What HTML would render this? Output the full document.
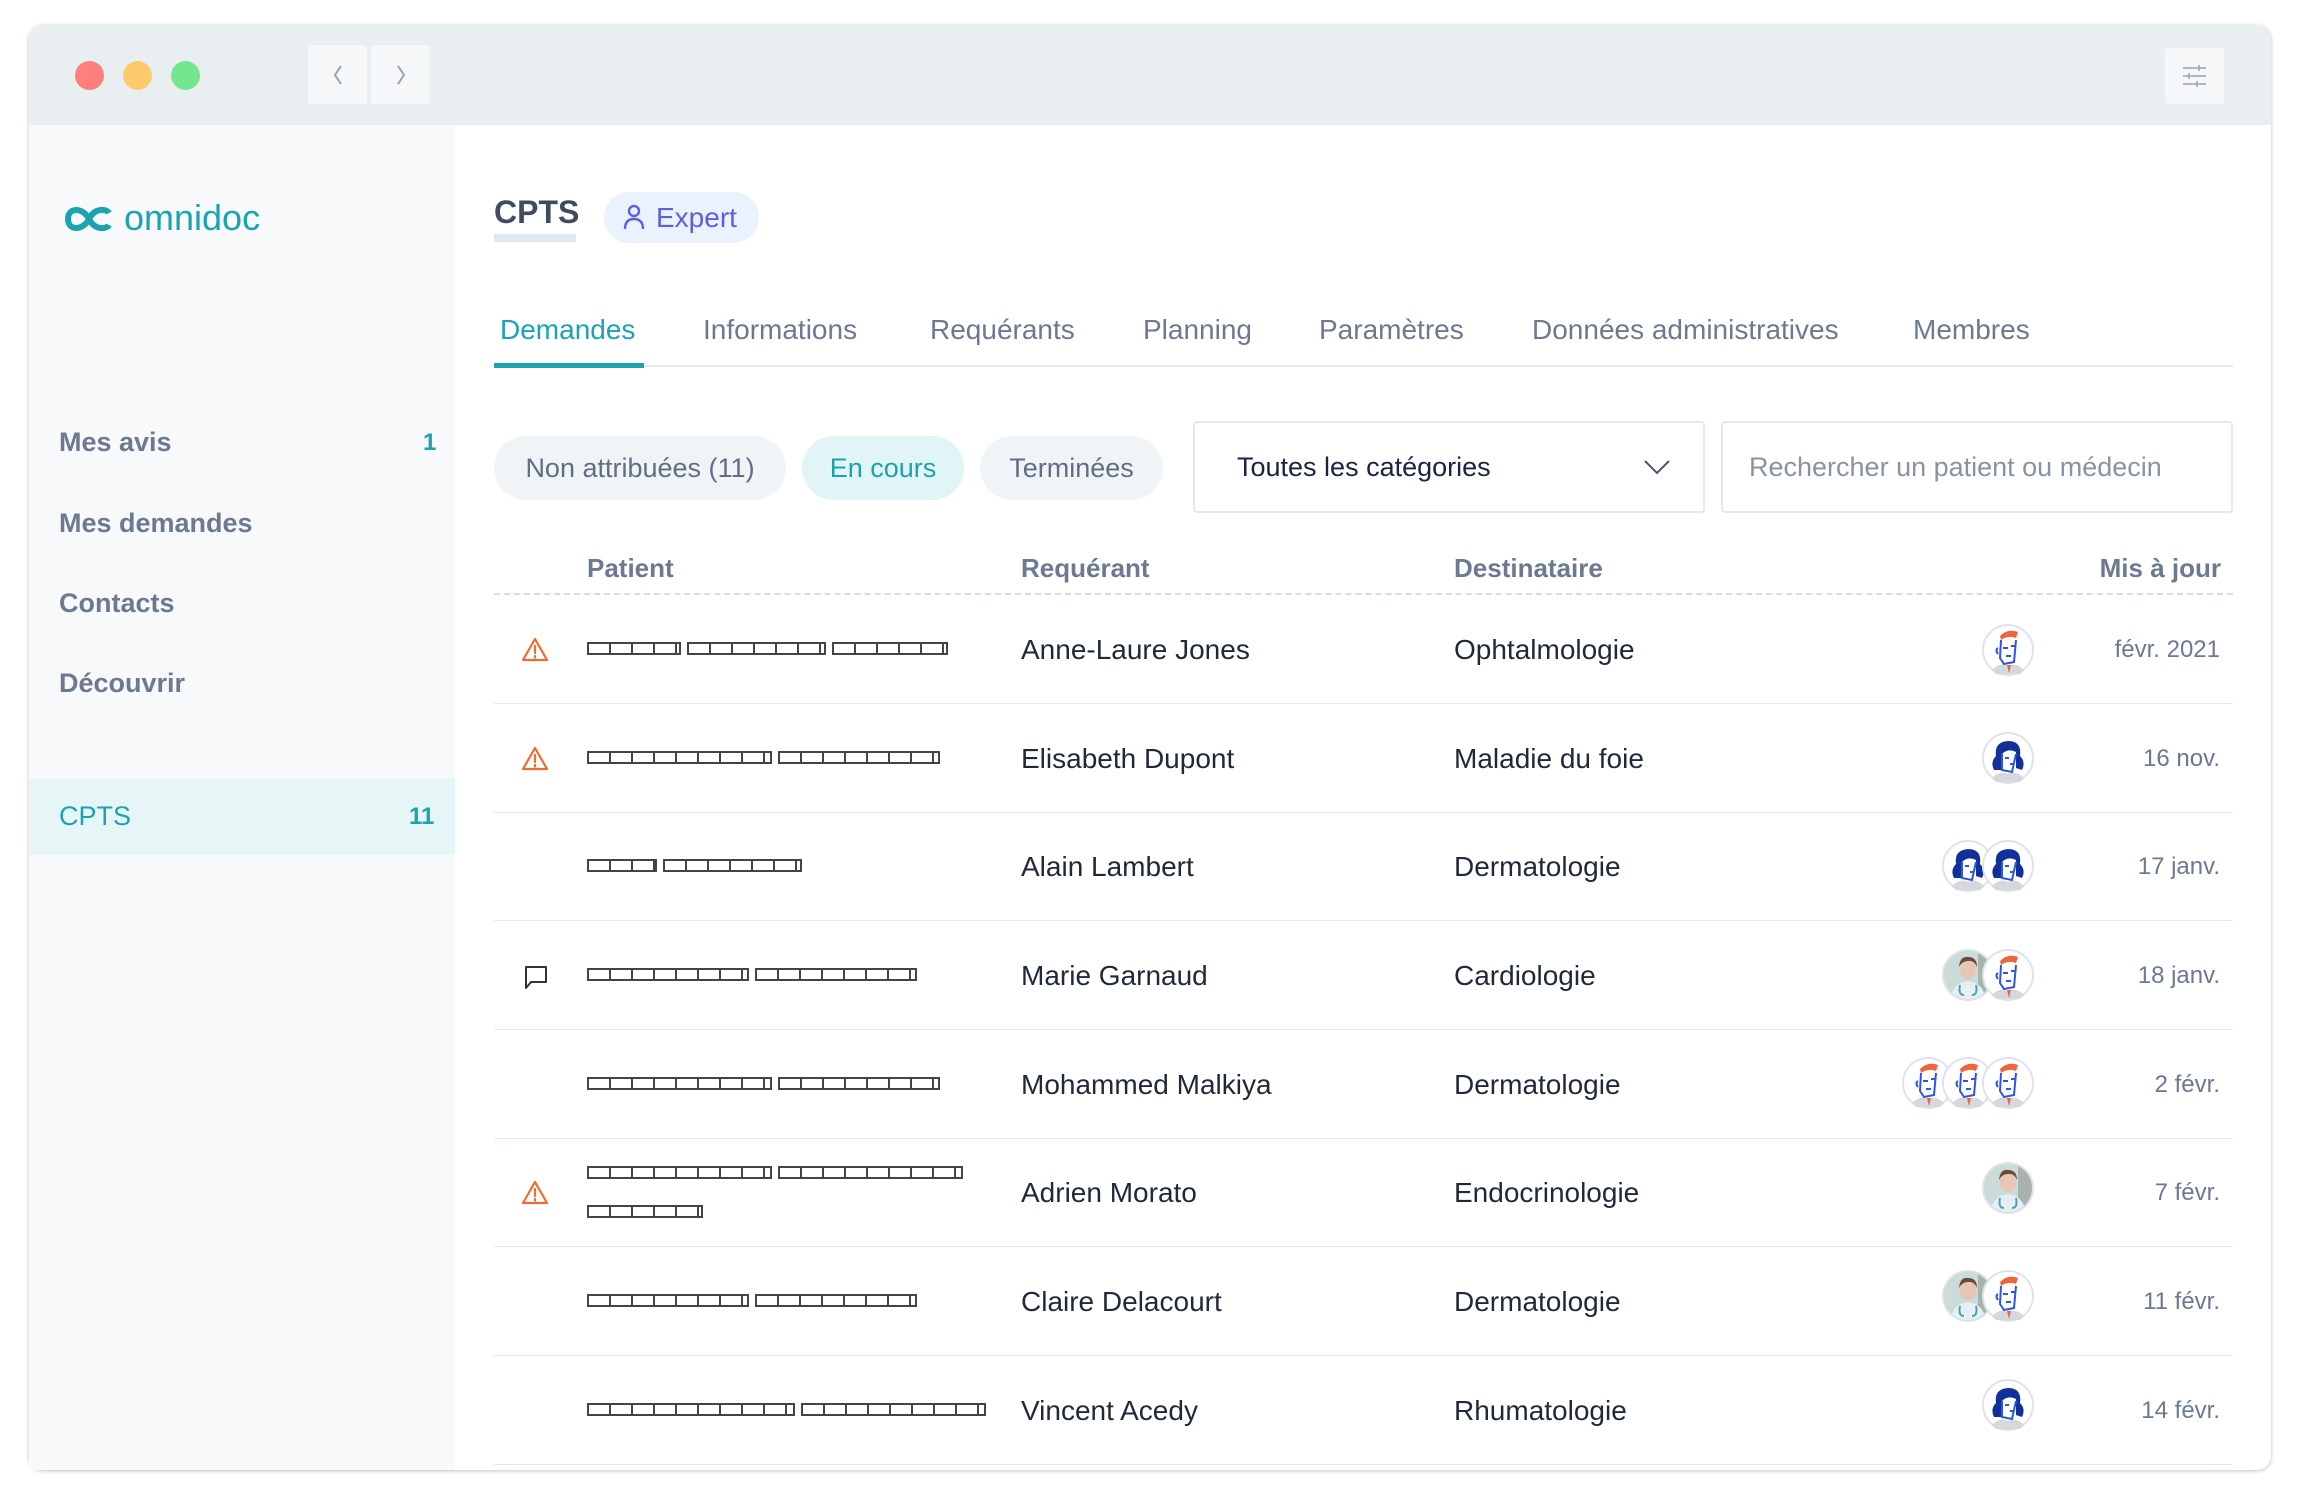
<!DOCTYPE html>
<html><head><meta charset="utf-8"><style>
*{margin:0;padding:0;box-sizing:border-box}
body{width:2300px;height:1496px;background:#fff;font-family:"Liberation Sans",sans-serif;position:relative;overflow:hidden}
.abs{position:absolute}
.win{left:29px;top:25px;width:2242px;height:1445px;border-radius:14px;background:#fff;box-shadow:0 1px 4px rgba(0,0,0,.25);overflow:hidden}
.bar{left:29px;top:25px;width:2242px;height:100px;background:#e9eff1;border-radius:14px 14px 0 0}
.dot{width:29px;height:29px;border-radius:50%;top:61px}
.nav{top:45px;width:59px;height:59px;background:#f5f7f9;border-radius:3px}
.side{left:29px;top:125px;width:426px;height:1345px;background:#f7f9fb}
.si{left:59px;font-size:27px;color:#6b7a90;font-weight:bold}
.tab{top:314px;font-size:28px;color:#6b7a90}
.pill{top:436px;height:64px;border-radius:32px;background:#f1f4f7;font-size:27px;color:#5f6e85;line-height:64px;text-align:center}
.h{top:553px;font-size:26px;color:#6b7a90;font-weight:bold}
.row{left:494px;width:1739px;height:1px;background:#e2e8f0}
.cell{font-size:28px;color:#1f2937}
.date{font-size:24px;color:#6b7a90;right:80px;text-align:right;width:200px}
.tofu{display:inline-block;height:13px;border:2px solid #444;background:repeating-linear-gradient(90deg,transparent 0 20px,#444 20px 22px);margin-right:6px;vertical-align:middle}
.pt{left:587px}
</style></head><body>
<svg width="0" height="0" style="position:absolute">
<defs>
<symbol id="man" viewBox="0 0 52 52"><circle cx="26" cy="26" r="25" fill="#fff" stroke="#dfe3e8" stroke-width="2"/><path d="M10 46 Q18 38 26 42 Q34 38 42 46 L38 50 H14Z" fill="#d5d8dc"/><path d="M18 12 Q26 4 36 8 L34 14 Q26 11 19 16Z" fill="#f0643c"/><path d="M19 16 L18 34 L22 40 L32 38 L34 16 M21 24 h5 M29 22 h4 M24 32 h5 M16 24 q-3 2 0 6" stroke="#2f55e6" stroke-width="2" fill="none"/><path d="M25 41 l2 8 2-8z" fill="#f0643c"/></symbol>
<symbol id="woman" viewBox="0 0 52 52"><circle cx="26" cy="26" r="25" fill="#fff" stroke="#dfe3e8" stroke-width="2"/><path d="M10 46 Q18 38 26 42 Q34 38 42 46 L38 50 H14Z" fill="#d5d8dc"/><path d="M12 38 Q8 30 14 24 Q12 10 26 9 Q40 9 38 24 Q44 30 40 38 L34 36 L34 20 Q26 16 20 22 L20 38Z" fill="#12309a"/><path d="M20 22 L20 38 L30 40 L34 22 M23 26 h4 M28 32 h4" stroke="#2f55e6" stroke-width="2" fill="none"/></symbol>
<symbol id="photo" viewBox="0 0 52 52"><defs><clipPath id="c"><circle cx="26" cy="26" r="24"/></clipPath></defs><circle cx="26" cy="26" r="25" fill="#cfe0e0" stroke="#dfe3e8" stroke-width="2"/><g clip-path="url(#c)"><rect x="0" y="0" width="52" height="52" fill="#c9dcd8"/><rect x="36" y="0" width="16" height="52" fill="#a9b3ad"/><path d="M8 52 Q10 34 26 32 Q42 34 44 52Z" fill="#e6f0f2"/><ellipse cx="26" cy="20" rx="8" ry="10" fill="#e8c6b4"/><path d="M17 18 Q18 7 26 8 Q35 8 35 18 Q32 11 26 12 Q20 12 17 18Z" fill="#6b4a3a"/><path d="M18 36 Q16 46 22 46 M34 36 Q36 46 30 46" stroke="#4b9fb0" stroke-width="2" fill="none"/></g></symbol>
<symbol id="warn" viewBox="0 0 28 28"><path d="M14 3 L26 24 H2Z" fill="none" stroke="#ef6c2f" stroke-width="2.2" stroke-linejoin="round"/><path d="M14 10 V17 M14 20 V21.5" stroke="#ef6c2f" stroke-width="2.2" stroke-linecap="round"/></symbol>
</defs></svg>

<div class="abs win"></div>
<div class="abs bar"></div>
<div class="abs dot" style="left:75px;background:#fe7f7b"></div>
<div class="abs dot" style="left:123px;background:#fdcb6b"></div>
<div class="abs dot" style="left:171px;background:#74e68f"></div>
<div class="abs nav" style="left:308px"><svg width="59" height="59"><path d="M33 21 L27 30 L33 39" stroke="#9aa3ad" stroke-width="2" fill="none"/></svg></div>
<div class="abs nav" style="left:371px"><svg width="59" height="59"><path d="M27 21 L33 30 L27 39" stroke="#9aa3ad" stroke-width="2" fill="none"/></svg></div>
<div class="abs" style="left:2165px;top:48px;width:59px;height:56px;background:#f5f7f9;border-radius:3px"><svg width="59" height="56"><path d="M18 20h23M18 28h23M18 36h23" stroke="#9aa3ad" stroke-width="1.5"/><path d="M34 17v6M24 25v6M32 33v6" stroke="#9aa3ad" stroke-width="1.5"/></svg></div>

<div class="abs side"></div>
<svg class="abs" style="left:63px;top:203px" width="52" height="32" viewBox="0 0 52 32"><path d="M26 16 C20 4 5 4 5 16 C5 28 20 28 26 16 C32 4 44 6 46 10 M26 16 C32 28 44 26 46 22" stroke="#1ba3b0" stroke-width="6" fill="none"/></svg>
<div class="abs" style="left:124px;top:197px;font-size:36px;color:#1ba3b0">omnidoc</div>
<div class="abs si" style="top:427px">Mes avis</div>
<div class="abs" style="left:423px;top:429px;font-size:24px;color:#1ba3b0;font-weight:bold">1</div>
<div class="abs si" style="top:508px">Mes demandes</div>
<div class="abs si" style="top:588px">Contacts</div>
<div class="abs si" style="top:668px">Découvrir</div>
<div class="abs" style="left:29px;top:778px;width:426px;height:77px;background:#e6f6f7"></div>
<div class="abs si" style="top:801px;color:#1ba3b0;font-weight:normal">CPTS</div>
<div class="abs" style="left:409px;top:803px;font-size:24px;color:#1ba3b0;font-weight:bold">11</div>

<div class="abs" style="left:494px;top:194px;font-size:32px;font-weight:bold;color:#3f4b5e">CPTS</div>
<div class="abs" style="left:494px;top:234px;width:82px;height:8px;background:#e2e8f0"></div>
<div class="abs" style="left:604px;top:192px;width:155px;height:51px;border-radius:26px;background:#eaf2fd;color:#5b5fe0;font-size:28px;line-height:51px;padding-left:52px">Expert</div>
<svg class="abs" style="left:622px;top:203px" width="24" height="28"><circle cx="12" cy="8" r="5" fill="none" stroke="#5b5fe0" stroke-width="2.4"/><path d="M3 26 Q3 16 12 16 Q21 16 21 26" fill="none" stroke="#5b5fe0" stroke-width="2.4"/></svg>

<div class="abs tab" style="left:500px;color:#1ba3b0">Demandes</div>
<div class="abs tab" style="left:703px">Informations</div>
<div class="abs tab" style="left:930px">Requérants</div>
<div class="abs tab" style="left:1143px">Planning</div>
<div class="abs tab" style="left:1319px">Paramètres</div>
<div class="abs tab" style="left:1532px">Données administratives</div>
<div class="abs tab" style="left:1913px">Membres</div>
<div class="abs" style="left:494px;top:365px;width:1739px;height:2px;background:#e5e9ef"></div>
<div class="abs" style="left:494px;top:363px;width:150px;height:5px;background:#1ba3b0"></div>

<div class="abs pill" style="left:494px;width:292px">Non attribuées (11)</div>
<div class="abs pill" style="left:802px;width:162px;background:#e1f5f6;color:#1ba3b0">En cours</div>
<div class="abs pill" style="left:980px;width:183px">Terminées</div>
<div class="abs" style="left:1193px;top:421px;width:512px;height:92px;border:2px solid #e5e9ef;border-radius:4px;font-size:27px;color:#1a2340;line-height:88px;padding-left:42px">Toutes les catégories<svg class="abs" style="right:32px;top:36px" width="28" height="16"><path d="M2 2 L14 14 L26 2" stroke="#4a5568" stroke-width="2" fill="none"/></svg></div>
<div class="abs" style="left:1721px;top:421px;width:512px;height:92px;border:2px solid #e5e9ef;border-radius:4px;font-size:27px;color:#8a93a3;line-height:88px;padding-left:26px">Rechercher un patient ou médecin</div>

<div class="abs h" style="left:587px">Patient</div>
<div class="abs h" style="left:1021px">Requérant</div>
<div class="abs h" style="left:1454px">Destinataire</div>
<div class="abs h" style="left:2000px;width:221px;text-align:right">Mis à jour</div>
<div class="abs" style="left:494px;top:593px;width:1739px;border-top:2px dashed #d6dde6"></div>

<div class="abs row" style="top:703px"></div>
<div class="abs row" style="top:812px"></div>
<div class="abs row" style="top:920px"></div>
<div class="abs row" style="top:1029px"></div>
<div class="abs row" style="top:1138px"></div>
<div class="abs row" style="top:1246px"></div>
<div class="abs row" style="top:1355px"></div>
<div class="abs row" style="top:1464px"></div>

<svg class="abs" style="left:521px;top:636px" width="28" height="28"><use href="#warn"/></svg>
<div class="abs pt" style="top:640px"><span class="tofu" style="width:94px"></span><span class="tofu" style="width:139px"></span><span class="tofu" style="width:116px"></span></div>
<div class="abs cell" style="left:1021px;top:634px">Anne-Laure Jones</div>
<div class="abs cell" style="left:1454px;top:634px">Ophtalmologie</div>
<svg class="abs" style="left:1982px;top:624px" width="52" height="52"><use href="#man"/></svg>
<div class="abs date" style="top:636px">févr. 2021</div>

<svg class="abs" style="left:521px;top:745px" width="28" height="28"><use href="#warn"/></svg>
<div class="abs pt" style="top:749px"><span class="tofu" style="width:185px"></span><span class="tofu" style="width:162px"></span></div>
<div class="abs cell" style="left:1021px;top:743px">Elisabeth Dupont</div>
<div class="abs cell" style="left:1454px;top:743px">Maladie du foie</div>
<svg class="abs" style="left:1982px;top:732px" width="52" height="52"><use href="#woman"/></svg>
<div class="abs date" style="top:745px">16 nov.</div>

<div class="abs pt" style="top:857px"><span class="tofu" style="width:70px"></span><span class="tofu" style="width:139px"></span></div>
<div class="abs cell" style="left:1021px;top:851px">Alain Lambert</div>
<div class="abs cell" style="left:1454px;top:851px">Dermatologie</div>
<svg class="abs" style="left:1942px;top:840px" width="52" height="52"><use href="#woman"/></svg>
<svg class="abs" style="left:1982px;top:840px" width="52" height="52"><use href="#woman"/></svg>
<div class="abs date" style="top:853px">17 janv.</div>

<svg class="abs" style="left:522px;top:963px" width="28" height="28"><path d="M4 4 H24 V19 H9 L4 25Z" fill="none" stroke="#333" stroke-width="2" stroke-linejoin="round"/></svg>
<div class="abs pt" style="top:966px"><span class="tofu" style="width:162px"></span><span class="tofu" style="width:162px"></span></div>
<div class="abs cell" style="left:1021px;top:960px">Marie Garnaud</div>
<div class="abs cell" style="left:1454px;top:960px">Cardiologie</div>
<svg class="abs" style="left:1942px;top:949px" width="52" height="52"><use href="#photo"/></svg>
<svg class="abs" style="left:1982px;top:949px" width="52" height="52"><use href="#man"/></svg>
<div class="abs date" style="top:962px">18 janv.</div>

<div class="abs pt" style="top:1075px"><span class="tofu" style="width:185px"></span><span class="tofu" style="width:162px"></span></div>
<div class="abs cell" style="left:1021px;top:1069px">Mohammed Malkiya</div>
<div class="abs cell" style="left:1454px;top:1069px">Dermatologie</div>
<svg class="abs" style="left:1902px;top:1057px" width="52" height="52"><use href="#man"/></svg>
<svg class="abs" style="left:1942px;top:1057px" width="52" height="52"><use href="#man"/></svg>
<svg class="abs" style="left:1982px;top:1057px" width="52" height="52"><use href="#man"/></svg>
<div class="abs date" style="top:1071px">2 févr.</div>

<svg class="abs" style="left:521px;top:1179px" width="28" height="28"><use href="#warn"/></svg>
<div class="abs pt" style="top:1164px"><span class="tofu" style="width:185px"></span><span class="tofu" style="width:185px"></span></div>
<div class="abs pt" style="top:1203px"><span class="tofu" style="width:116px"></span></div>
<div class="abs cell" style="left:1021px;top:1177px">Adrien Morato</div>
<div class="abs cell" style="left:1454px;top:1177px">Endocrinologie</div>
<svg class="abs" style="left:1982px;top:1162px" width="52" height="52"><use href="#photo"/></svg>
<div class="abs date" style="top:1179px">7 févr.</div>

<div class="abs pt" style="top:1292px"><span class="tofu" style="width:162px"></span><span class="tofu" style="width:162px"></span></div>
<div class="abs cell" style="left:1021px;top:1286px">Claire Delacourt</div>
<div class="abs cell" style="left:1454px;top:1286px">Dermatologie</div>
<svg class="abs" style="left:1942px;top:1270px" width="52" height="52"><use href="#photo"/></svg>
<svg class="abs" style="left:1982px;top:1270px" width="52" height="52"><use href="#man"/></svg>
<div class="abs date" style="top:1288px">11 févr.</div>

<div class="abs pt" style="top:1401px"><span class="tofu" style="width:208px"></span><span class="tofu" style="width:185px"></span></div>
<div class="abs cell" style="left:1021px;top:1395px">Vincent Acedy</div>
<div class="abs cell" style="left:1454px;top:1395px">Rhumatologie</div>
<svg class="abs" style="left:1982px;top:1379px" width="52" height="52"><use href="#woman"/></svg>
<div class="abs date" style="top:1397px">14 févr.</div>
</body></html>
